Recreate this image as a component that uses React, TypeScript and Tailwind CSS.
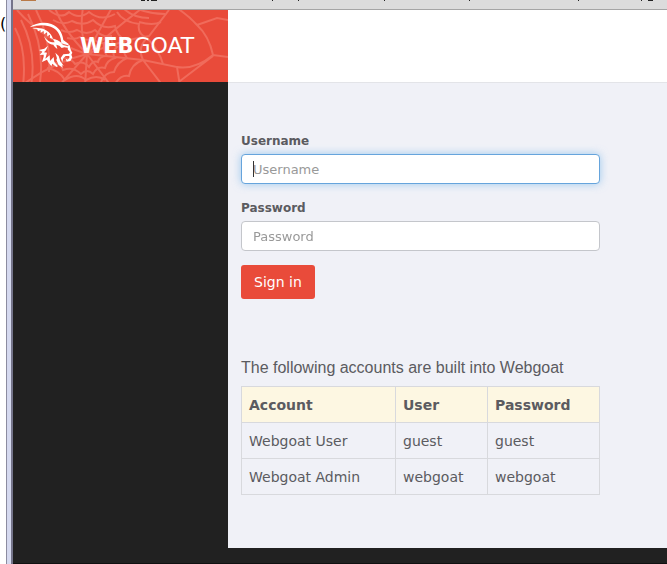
import { useState } from "react";
import type { InputHTMLAttributes } from "react";

const accounts = [
  { account: "Webgoat User", user: "guest", password: "guest" },
  { account: "Webgoat Admin", user: "webgoat", password: "webgoat" },
];

// spider web behind the logo: threads first, then the sagging rings
function WebPattern() {
  return (
    <svg
      className="absolute inset-0 h-full w-full"
      viewBox="0 0 215 72"
      preserveAspectRatio="xMinYMin slice"
      fill="none"
      stroke="#f06b5b"
      strokeWidth="2"
      aria-hidden="true"
    >
      <path d="M74 44Q50 20 42 -2M74 44Q66 20 70 -2M74 44Q86 20 100 -4M74 44Q100 20 132 -4M74 44Q30 30 4 0M74 44Q40 52 8 76M74 44L46 76M74 44L72 76M74 44L98 76M74 44L130 50L164 57L167 76M74 44Q110 30 136 26L156 0M164 57Q182 60 200 45L215 47M200 45Q196 26 184 15Q176 6 164 -2M184 15L204 8L215 10M167 71Q184 58 200 46M130 50L150 76" />
      <path d="M2 18Q14 40 10 76M8 10Q24 40 18 76M15 4Q32 38 27 72M23 0Q38 28 36 62M36 0Q48 10 56 2Q66 10 76 2Q88 12 102 4" />
      <path d="M104 2Q110 12 126 14Q124 24 134 28Q124 38 130 50Q118 54 116 66Q108 64 102 74M110 -2Q120 8 136 8M126 12Q140 16 148 12M134 28Q146 40 150 54M118 -4Q134 4 152 4" />
      <path d="M40 10Q50 16 59 11Q70 17 80 10Q90 20 102 16Q104 26 112 30Q108 40 114 48Q104 52 101 62Q92 62 88 72M34 58Q46 60 52 70Q64 62 73 70Q84 64 92 70" />
      <path d="M48 20Q56 24 64 20Q74 26 82 20Q90 28 98 26Q98 34 104 37Q98 42 102 48Q94 50 92 58Q84 56 80 64Q74 58 68 64Q60 56 50 60Q48 52 36 52" />
      <path d="M54 28Q62 30 67 27Q74 32 79 28Q86 34 91 33Q90 40 94 46Q86 46 85 52Q80 50 76 57Q70 50 62 54Q58 48 50 48" />
    </svg>
  );
}

function GoatIcon() {
  return (
    <svg className="h-[50px] w-[50px] shrink-0" viewBox="0 3 150 150" fill="#fff" aria-hidden="true">
      {/* horn */}
      <path d="M5 22C22 8 50 5 70 12C93 21 103 38 106 60L122 72L120 76L100 70C99 50 92 34 76 24C56 13 32 14 5 22Z" />
      <path d="M12 26C28 22 42 23 54 31C66 38 72 47 75 58L66 53L66 44L58 49L57 37L48 43L47 33L38 38L38 30L30 34L28 28Z" />
      {/* ear and brow */}
      <path d="M48 47C55 61 67 68 80 67L75 57C89 58 98 66 105 75L119 79L126 76L124 84L109 82L101 84L94 77L85 74L88 87C82 83 79 79 76 74C64 73 52 64 48 47Z" />
      {/* muzzle */}
      <path d="M122 72C127 82 128 91 133 98L130 104L133 112L127 123L116 125L113 116L119 119L124 114L124 108L113 108L106 115L103 126L98 114L106 103L123 101L126 97L119 88Z" />
      {/* mane and beard */}
      <path d="M33 90L49 86L60 77L54 91L48 97L57 98L52 116L65 106L66 123L77 111L79 126L90 139L85 141L73 131L70 139L60 125L57 119L42 126L47 110L47 104L35 105L43 95Z" />
      <path d="M82 98L92 108L97 124L107 137L101 136L105 143L92 135L85 120L87 115Z" />
    </svg>
  );
}

// lower edge of the browser toolbar
function Toolbar() {
  return (
    <div className="h-[10px] shrink-0 border-b border-[#a5a5a5] bg-[#dcdcdc]">
      <svg className="h-[9px] w-[654px]" viewBox="0 0 654 9" aria-hidden="true">
        <path fill="#b97a48" d="M8 0h15v1H8z" />
        <path fill="#222" d="M128 0h4v1h-4zM134 0h2v1h-2zM138 0h6v1h-6zM259 0h1v1h-1zM285 0h1v1h-1zM371 0h1v1h-1zM456 0h1v1h-1zM565 0h1v1h-1zM628 0h1v1h-1zM635 0h5v1h-5z" />
      </svg>
    </div>
  );
}

interface FieldProps extends InputHTMLAttributes<HTMLInputElement> {
  id: string;
  label: string;
}

function Field({ id, label, ...rest }: FieldProps) {
  return (
    <div className="mb-3.5">
      <label htmlFor={id} className="mb-[3px] block text-xs leading-5 font-bold">
        {label}
      </label>
      <div className="relative">
        <input
          id={id}
          className="peer block h-[30px] w-full rounded border border-[#c4c6cb] bg-white px-[11px] text-[13px] text-[#555] caret-transparent outline-none placeholder:text-[#999] not-placeholder-shown:caret-black focus:border-[#66a4dc] focus:shadow-[0_0_8px_rgba(102,175,233,0.6)]"
          {...rest}
        />
        {/* steady caret while the box is empty */}
        <span className="pointer-events-none absolute inset-y-[7px] left-3 hidden w-px bg-[#333] peer-placeholder-shown:peer-focus:block" />
      </div>
    </div>
  );
}

export default function App() {
  const [username, setUsername] = useState("");
  const [password, setPassword] = useState("");

  return (
    <div className="flex min-h-screen overflow-hidden bg-white font-['DejaVu_Sans',sans-serif] text-[#5b5b60]">
      <div className="w-[6px] shrink-0 overflow-hidden pt-3.5 text-base leading-5 text-black">(</div>
      <div className="w-[7px] shrink-0 border-r-2 border-l border-r-[#74748a] border-l-[#8c8ca0] bg-[#d5d9ef]" />

      <div className="flex min-w-0 flex-1 flex-col border-b border-[#111] bg-[#212121]">
        <Toolbar />
        <header className="flex h-[72px] shrink-0 bg-white">
          <a href="#" className="relative flex w-[215px] shrink-0 items-center overflow-hidden bg-[#e94b3a] pl-[15px] text-[22px] text-white">
            <WebPattern />
            <span className="relative flex items-center gap-0.5">
              <GoatIcon />
              <span>
                <b className="text-[21px]">WEB</b>GOAT
              </span>
            </span>
          </a>
        </header>

        <div className="flex flex-1 pb-[15px]">
          <aside className="w-[215px] shrink-0" />
          <main className="min-w-0 flex-1 border-t border-[#e3e4e8] bg-[#f0f1f7] px-[13px] pt-12">
            <div className="max-w-[359px]">
              <form onSubmit={(e) => e.preventDefault()}>
                <Field
                  id="username"
                  label="Username"
                  placeholder="Username"
                  value={username}
                  onChange={(e) => setUsername(e.target.value)}
                  autoFocus
                />
                <Field
                  id="password"
                  label="Password"
                  type="password"
                  placeholder="Password"
                  value={password}
                  onChange={(e) => setPassword(e.target.value)}
                />
                <button type="submit" className="block h-[34px] rounded-[3px] bg-[#e94b3a] px-[13px] text-sm text-white">
                  Sign in
                </button>
              </form>

              <h4 className="mt-[59px] mb-2 font-['Liberation_Sans',sans-serif] text-base leading-5">
                The following accounts are built into Webgoat
              </h4>
              <table className="w-full table-fixed border-collapse text-left text-sm">
                <thead>
                  <tr className="h-9 bg-[#fdf7e2]">
                    <th className="w-[154px] border border-[#d8d9dd] px-[7px]">Account</th>
                    <th className="w-[92px] border border-[#d8d9dd] px-[7px]">User</th>
                    <th className="border border-[#d8d9dd] px-[7px]">Password</th>
                  </tr>
                </thead>
                <tbody>
                  {accounts.map((a) => (
                    <tr key={a.user} className="h-9">
                      <td className="border border-[#d8d9dd] px-[7px]">{a.account}</td>
                      <td className="border border-[#d8d9dd] px-[7px]">{a.user}</td>
                      <td className="border border-[#d8d9dd] px-[7px]">{a.password}</td>
                    </tr>
                  ))}
                </tbody>
              </table>
            </div>
          </main>
        </div>
      </div>
    </div>
  );
}
